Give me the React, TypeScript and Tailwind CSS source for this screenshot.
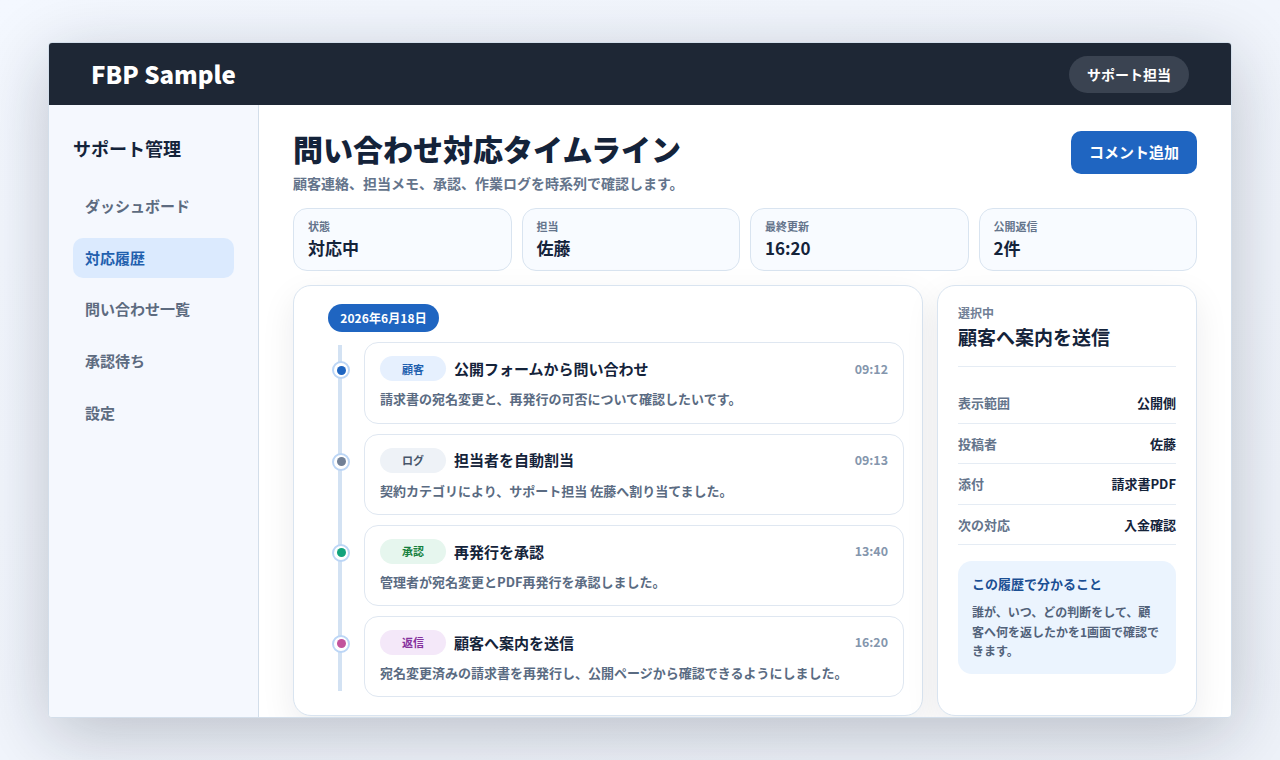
const navItems = ["ダッシュボード", "対応履歴", "問い合わせ一覧", "承認待ち", "設定"];

const stats = [
  { label: "状態", value: "対応中" },
  { label: "担当", value: "佐藤" },
  { label: "最終更新", value: "16:20" },
  { label: "公開返信", value: "2件" },
];

const events = [
  {
    tag: "顧客",
    tagClass: "bg-[#e6f0fe] text-[#1f5fae]",
    dotClass: "bg-[#1f65c1]",
    title: "公開フォームから問い合わせ",
    time: "09:12",
    body: "請求書の宛名変更と、再発行の可否について確認したいです。",
  },
  {
    tag: "ログ",
    tagClass: "bg-[#eef2f7] text-[#475569]",
    dotClass: "bg-[#718096]",
    title: "担当者を自動割当",
    time: "09:13",
    body: "契約カテゴリにより、サポート担当 佐藤へ割り当てました。",
  },
  {
    tag: "承認",
    tagClass: "bg-[#e6f6ee] text-[#15803d]",
    dotClass: "bg-[#12a37c]",
    title: "再発行を承認",
    time: "13:40",
    body: "管理者が宛名変更とPDF再発行を承認しました。",
  },
  {
    tag: "返信",
    tagClass: "bg-[#f4e8f9] text-[#86329e]",
    dotClass: "bg-[#c2549c]",
    title: "顧客へ案内を送信",
    time: "16:20",
    body: "宛名変更済みの請求書を再発行し、公開ページから確認できるようにしました。",
  },
];

const details = [
  { label: "表示範囲", value: "公開側" },
  { label: "投稿者", value: "佐藤" },
  { label: "添付", value: "請求書PDF" },
  { label: "次の対応", value: "入金確認" },
];

export default function App() {
  return (
    <div className="h-[760px] overflow-hidden bg-gradient-to-br from-[#f4f8ff] to-[#eef2f9] px-[48px] py-[42px] font-['Noto_Sans_CJK_JP',sans-serif] text-[#14233a]">
      <div className="flex h-[676px] flex-col overflow-hidden rounded-[4px] border border-[#d3deea] bg-white shadow-[0_16px_70px_rgba(15,23,42,0.24)]">
        <header className="flex h-[62px] shrink-0 items-center justify-between bg-[#1e2735] pl-[42px] pr-[42px]">
          <div className="text-[24px] leading-none font-extrabold text-white">FBP Sample</div>
          <div className="flex h-[37px] w-[120px] items-center justify-center rounded-full bg-[#3a4351] text-[14px] font-bold text-white">
            サポート担当
          </div>
        </header>
        <div className="flex min-h-0 flex-1">
          <aside className="w-[210px] shrink-0 border-r border-[#d3deea] bg-[#f5f8fe] px-[24px] pt-[29px]">
            <div className="text-[18px] leading-[28px] font-bold">サポート管理</div>
            <nav className="mt-[24.5px] flex flex-col gap-[12px]">
              {navItems.map((item) => (
                <div
                  key={item}
                  className={
                    item === "対応履歴"
                      ? "flex h-[39.7px] items-center rounded-[10px] bg-[#dbeafe] px-[12px] text-[15px] font-bold text-[#1f5fae]"
                      : "flex h-[39.7px] items-center rounded-[10px] px-[12px] text-[15px] font-bold text-[#5d6b80]"
                  }
                >
                  {item}
                </div>
              ))}
            </nav>
          </aside>
          <main className="min-w-0 flex-1 px-[34px] pt-[26px]">
            <div className="flex items-start justify-between">
              <div>
                <h1 className="text-[30px] leading-[34px] font-extrabold">問い合わせ対応タイムライン</h1>
                <p className="mt-[10px] text-[14px] leading-[16px] font-semibold text-[#64748b]">
                  顧客連絡、担当メモ、承認、作業ログを時系列で確認します。
                </p>
              </div>
              <button className="flex h-[43px] w-[126px] items-center justify-center rounded-[10px] bg-[#1f65c1] text-[15px] font-bold text-white">
                コメント追加
              </button>
            </div>
            <div className="mt-[17px] grid grid-cols-4 gap-[10px]">
              {stats.map((s) => (
                <div key={s.label} className="h-[63px] rounded-[14px] border border-[#d9e4f0] bg-[#f8fbff] px-[14px] pt-[9px]">
                  <div className="text-[11px] leading-[16px] font-bold text-[#64748b]">{s.label}</div>
                  <div className="mt-[2px] text-[17px] leading-[24px] font-bold">{s.value}</div>
                </div>
              ))}
            </div>
            <div className="mt-[14px] flex gap-[14px]">
              <section className="h-[431px] w-[630px] shrink-0 rounded-[18px] border border-[#d9e4f0] bg-white pl-[34px] pr-[18px] pt-[18px] shadow-[0_12px_34px_rgba(15,23,42,0.08)]">
                <div className="flex h-[28px] w-[111px] items-center justify-center rounded-full bg-[#1f65c1] text-[12px] font-bold tracking-[0.1px] text-white">
                  2026年6月18日
                </div>
                <div className="relative mt-[10.4px] flex flex-col gap-[10px] pl-[36px]">
                  <div className="absolute bottom-[6px] left-[10px] top-[3px] w-[4px] bg-[#d3e2f3]" />
                  {events.map((e) => (
                    <article key={e.title} className="relative h-[81.2px] rounded-[14px] border border-[#dfe7f1] bg-white px-[15px] pt-[13px]">
                      <span className="absolute left-[-33px] top-[18px] flex h-[18px] w-[18px] items-center justify-center rounded-full border-2 border-[#bcd6f6] bg-white">
                        <span className={`h-[9px] w-[9px] rounded-full ${e.dotClass}`} />
                      </span>
                      <div className="flex items-center">
                        <span className={`flex h-[25px] w-[66px] shrink-0 items-center justify-center rounded-full text-[11px] font-bold ${e.tagClass}`}>
                          {e.tag}
                        </span>
                        <span className="ml-[8px] flex-1 pt-[1px] text-[15px] font-bold">{e.title}</span>
                        <span className="text-[12.4px] font-bold text-[#8496ad]">{e.time}</span>
                      </div>
                      <p className="mt-[8px] text-[13px] leading-[20px] font-semibold text-[#5a6b82]">{e.body}</p>
                    </article>
                  ))}
                </div>
              </section>
              <aside className="h-[431px] min-w-0 flex-1 rounded-[18px] border border-[#d9e4f0] bg-white px-[20px] pt-[19px] shadow-[0_12px_34px_rgba(15,23,42,0.08)]">
                <div className="text-[12px] leading-[16px] font-bold text-[#718096]">選択中</div>
                <div className="mt-[2px] border-b border-[#e5ecf4] pb-[15px] text-[19px] leading-[28px] font-bold">
                  顧客へ案内を送信
                </div>
                <div className="mt-[16px]">
                  {details.map((d) => (
                    <div key={d.label} className="flex h-[40.5px] items-center justify-between border-b border-[#e5ecf4] text-[13px]">
                      <span className="font-semibold text-[#64748b]">{d.label}</span>
                      <span className="font-bold">{d.value}</span>
                    </div>
                  ))}
                </div>
                <div className="mt-[16px] h-[113px] rounded-[14px] bg-[#ebf4fe] px-[14px] pt-[13px]">
                  <div className="text-[13px] leading-[20px] font-bold text-[#1b4f93]">この履歴で分かること</div>
                  <p className="mt-[8px] text-[12px] leading-[19.6px] font-semibold text-[#52627a]">
                    誰が、いつ、どの判断をして、顧客へ何を返したかを1画面で確認できます。
                  </p>
                </div>
              </aside>
            </div>
          </main>
        </div>
      </div>
    </div>
  );
}
